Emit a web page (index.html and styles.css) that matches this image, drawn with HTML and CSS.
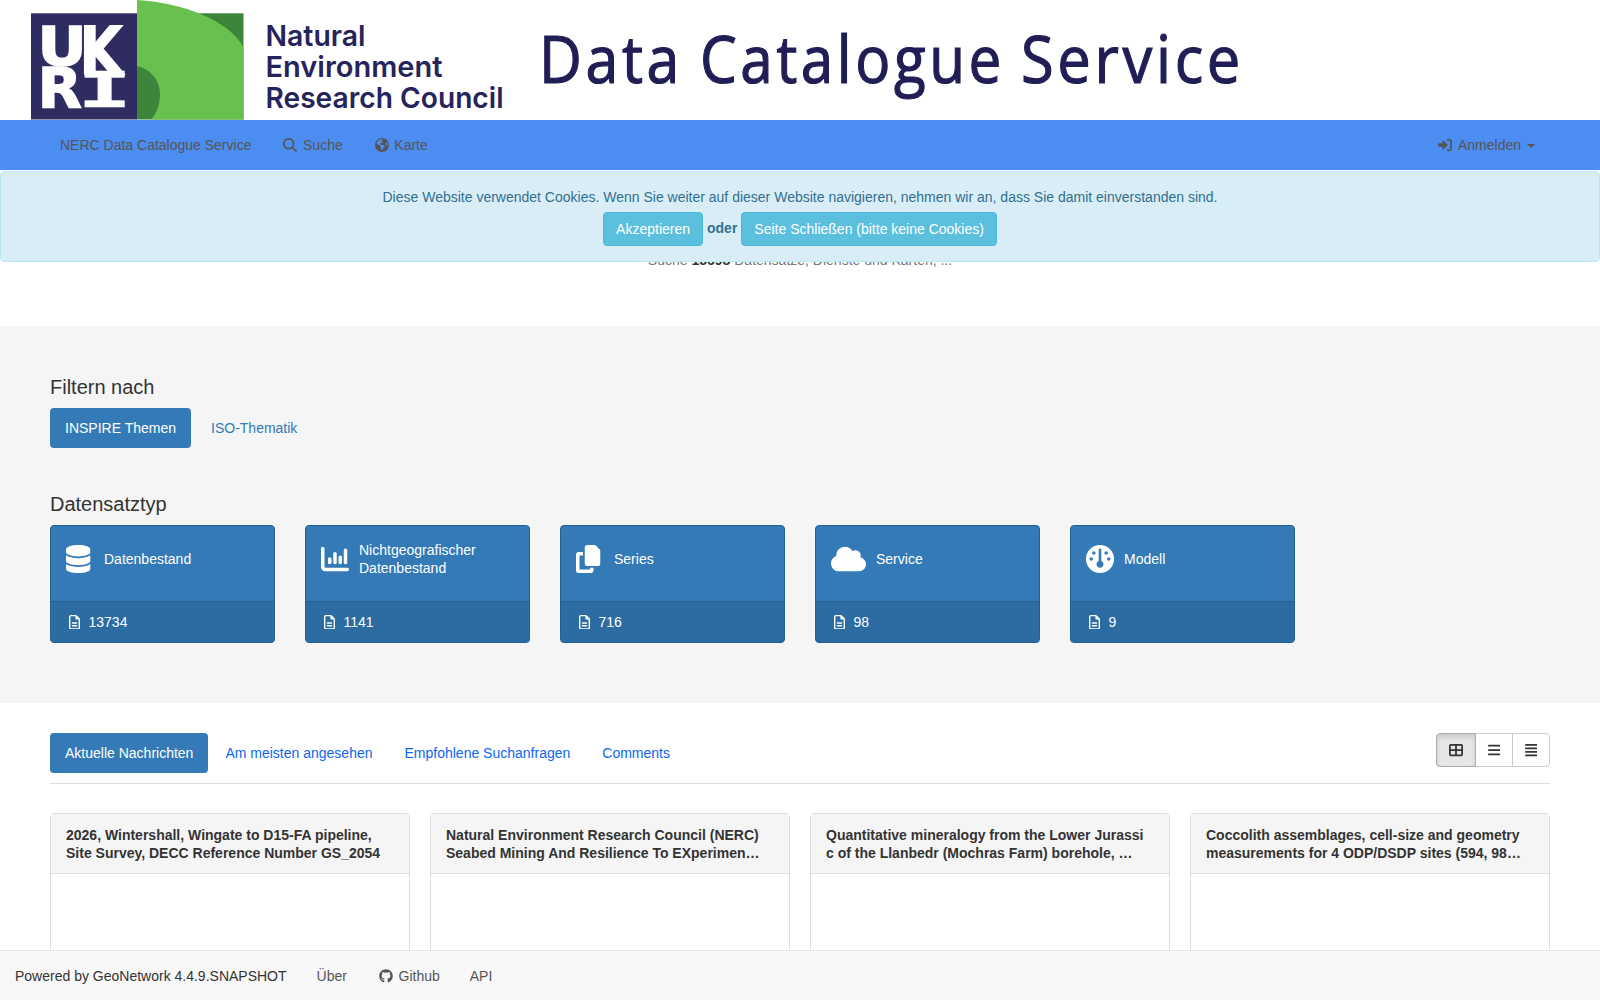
FILE: index.html
```html
<!DOCTYPE html>
<html lang="de">
<head>
<meta charset="utf-8">
<title>NERC Data Catalogue Service</title>
<link rel="stylesheet" href="styles.css">
</head>
<body>
<svg class="sprite" aria-hidden="true">
  <symbol id="search" viewBox="0 0 512 512"><path d="M416 208c0 45.9-14.9 88.3-40 122.7L502.6 457.4c12.5 12.5 12.5 32.8 0 45.3s-32.8 12.5-45.3 0L330.7 376c-34.4 25.2-76.8 40-122.7 40C93.1 416 0 322.9 0 208S93.1 0 208 0S416 93.1 416 208zM208 352a144 144 0 1 0 0-288 144 144 0 1 0 0 288z"/></symbol>
  <symbol id="globe" viewBox="0 0 512 512"><path d="M57.7 193l9.4 16.4c8.3 14.5 21.9 25.2 38 29.8L163 255.7c17.2 4.9 29 20.6 29 38.5v39.9c0 11 6.2 21 16 25.9s16 14.9 16 25.9v39c0 15.6 14.9 26.9 29.9 22.6c16.1-4.6 28.6-17.5 32.7-33.8l2.8-11.2c4.2-16.9 15.2-31.4 30.3-40l8.1-4.6c15-8.5 24.2-24.5 24.2-41.7v-8.3c0-12.7-5.1-24.9-14.1-33.9l-3.9-3.9c-9-9-21.2-14.1-33.9-14.1H257c-11.1 0-22.1-2.9-31.8-8.4l-34.5-19.7c-4.3-2.5-7.6-6.5-9.2-11.2c-3.2-9.6 1.1-20 10.2-24.5l5.9-3c6.6-3.3 14.3-3.9 21.3-1.5l23.2 7.7c8.2 2.7 17.2-.4 21.9-7.5c4.7-7 4.2-16.3-1.2-22.8l-13.6-16.3c-10-12-9.9-29.5 .3-41.3l15.7-18.3c8.8-10.3 10.2-25 3.5-36.7l-2.4-4.2c-3.5-.2-6.9-.3-10.4-.3C163.1 48 84.4 108.9 57.7 193zM464 256c0-36.8-9.6-71.4-26.4-101.5L412 164.8c-15.7 6.3-23.8 23.8-18.5 39.8l16.9 50.7c3.5 10.4 12 18.3 22.6 20.9l29.1 7.3c1.2-9 1.8-18.2 1.8-27.5zM0 256a256 256 0 1 1 512 0A256 256 0 1 1 0 256z"/></symbol>
  <symbol id="signin" viewBox="0 0 512 512"><path d="M217.9 105.9L340.7 228.7c7.2 7.2 11.3 17.1 11.3 27.3s-4.1 20.1-11.3 27.3L217.9 406.1c-6.4 6.4-15 9.9-24 9.9c-18.7 0-33.9-15.2-33.9-33.9l0-62.1L32 320c-17.7 0-32-14.3-32-32l0-64c0-17.7 14.3-32 32-32l128 0 0-62.1c0-18.7 15.2-33.9 33.9-33.9c9 0 17.6 3.6 24 9.9zM352 416l64 0c17.7 0 32-14.3 32-32l0-256c0-17.7-14.3-32-32-32l-64 0c-17.7 0-32-14.3-32-32s14.3-32 32-32l64 0c53 0 96 43 96 96l0 256c0 53-43 96-96 96l-64 0c-17.7 0-32-14.3-32-32s14.3-32 32-32z"/></symbol>
  <symbol id="database" viewBox="0 0 448 512"><path d="M448 80v48c0 44.2-100.3 80-224 80S0 172.2 0 128V80C0 35.8 100.3 0 224 0S448 35.8 448 80zM393.2 214.7c20.8-7.4 39.9-16.9 54.8-28.6V288c0 44.2-100.3 80-224 80S0 332.2 0 288V186.1c14.9 11.8 34 21.2 54.8 28.6C99.7 230.7 159.5 240 224 240s124.3-9.3 169.2-25.3zM0 346.1c14.9 11.8 34 21.2 54.8 28.6C99.7 390.7 159.5 400 224 400s124.3-9.3 169.2-25.3c20.8-7.4 39.9-16.9 54.8-28.6V432c0 44.2-100.3 80-224 80S0 476.2 0 432V346.1z"/></symbol>
  <symbol id="chart" viewBox="0 0 512 512"><path d="M32 32c17.7 0 32 14.3 32 32V400c0 8.8 7.2 16 16 16H480c17.7 0 32 14.3 32 32s-14.3 32-32 32H80c-44.2 0-80-35.8-80-80V64C0 46.3 14.3 32 32 32zM160 224c17.7 0 32 14.3 32 32v64c0 17.7-14.3 32-32 32s-32-14.3-32-32V256c0-17.7 14.3-32 32-32zm128-64V320c0 17.7-14.3 32-32 32s-32-14.3-32-32V160c0-17.7 14.3-32 32-32s32 14.3 32 32zm64 32c17.7 0 32 14.3 32 32v96c0 17.7-14.3 32-32 32s-32-14.3-32-32V224c0-17.7 14.3-32 32-32zM480 96V320c0 17.7-14.3 32-32 32s-32-14.3-32-32V96c0-17.7 14.3-32 32-32s32 14.3 32 32z"/></symbol>
  <symbol id="copy" viewBox="0 0 448 512"><path d="M208 0H332.1c12.7 0 24.9 5.1 33.9 14.1l67.9 67.9c9 9 14.1 21.2 14.1 33.9V336c0 26.5-21.5 48-48 48H208c-26.5 0-48-21.5-48-48V48c0-26.5 21.5-48 48-48zM48 128h80v64H64V448H256V416h64v48c0 26.5-21.5 48-48 48H48c-26.5 0-48-21.5-48-48V176c0-26.5 21.5-48 48-48z"/></symbol>
  <symbol id="cloud" viewBox="0 0 640 512"><path d="M0 336c0 79.5 64.5 144 144 144H512c70.7 0 128-57.3 128-128c0-61.9-44-113.6-102.4-125.4c4.1-10.7 6.4-22.4 6.4-34.6c0-53-43-96-96-96c-19.7 0-38.1 6-53.3 16.2C367 64.2 315.3 32 256 32C167.6 32 96 103.6 96 192c0 2.7 .1 5.4 .2 8.1C40.2 219.8 0 273.2 0 336z"/></symbol>
  <symbol id="gauge" viewBox="0 0 512 512"><path d="M0 256a256 256 0 1 1 512 0A256 256 0 1 1 0 256zm320 96c0-26.9-16.5-49.9-40-59.3V88c0-13.3-10.7-24-24-24s-24 10.7-24 24V292.7c-23.5 9.5-40 32.5-40 59.3c0 35.3 28.7 64 64 64s64-28.7 64-64zM144 176a32 32 0 1 0 0-64 32 32 0 1 0 0 64zm-16 80a32 32 0 1 0 -64 0 32 32 0 1 0 64 0zm288 32a32 32 0 1 0 0-64 32 32 0 1 0 0 64zM400 144a32 32 0 1 0 -64 0 32 32 0 1 0 64 0z"/></symbol>
  <symbol id="file" viewBox="0 0 384 512"><path d="M64 464c-8.8 0-16-7.2-16-16V64c0-8.8 7.2-16 16-16H224v80c0 17.7 14.3 32 32 32h80V448c0 8.8-7.2 16-16 16H64zM64 0C28.7 0 0 28.7 0 64V448c0 35.3 28.7 64 64 64H320c35.3 0 64-28.7 64-64V154.5c0-17-6.7-33.3-18.7-45.3L274.7 18.7C262.7 6.7 246.5 0 229.5 0H64zm56 256c-13.3 0-24 10.7-24 24s10.7 24 24 24H264c13.3 0 24-10.7 24-24s-10.7-24-24-24H120zm0 96c-13.3 0-24 10.7-24 24s10.7 24 24 24H264c13.3 0 24-10.7 24-24s-10.7-24-24-24H120z"/></symbol>
  <symbol id="github" viewBox="0 0 496 512"><path d="M244.8 8C106.1 8 0 113.3 0 252c0 110.9 69.8 205.8 169.5 239.2 12.8 2.3 17.3-5.6 17.3-12.1 0-6.2-.3-40.4-.3-61.4 0 0-70 15-84.7-29.8 0 0-11.4-29.1-27.8-36.6 0 0-22.9-15.7 1.6-15.4 0 0 24.9 2 38.6 25.8 21.9 38.6 58.6 27.5 72.9 20.9 2.3-16 8.8-27.1 16-33.7-55.9-6.2-112.3-14.3-112.3-110.5 0-27.5 7.6-41.3 23.6-58.9-2.6-6.5-11.1-33.3 2.6-67.9 20.9-6.5 69 27 69 27 20-5.6 41.5-8.5 62.8-8.5s42.8 2.9 62.8 8.5c0 0 48.1-33.6 69-27 13.7 34.7 5.2 61.4 2.6 67.9 16 17.7 25.8 31.5 25.8 58.9 0 96.5-58.9 104.2-114.8 110.5 9.2 7.9 17 22.9 17 46.4 0 33.7-.3 75.4-.3 83.6 0 6.5 4.6 14.4 17.3 12.1C428.2 457.8 496 362.9 496 252 496 113.3 383.5 8 244.8 8z"/></symbol>
  <symbol id="grid" viewBox="0 0 512 512"><path d="M448 96V224H288V96H448zm0 192V416H288V288H448zM224 224H64V96H224V224zM64 288H224V416H64V288zM64 32C28.7 32 0 60.7 0 96V416c0 35.3 28.7 64 64 64H448c35.3 0 64-28.7 64-64V96c0-35.3-28.7-64-64-64H64z"/></symbol>
  <symbol id="bars" viewBox="0 0 448 512"><path d="M32 64H416a32 32 0 0 1 0 64H32a32 32 0 0 1 0-64zM32 224H416a32 32 0 0 1 0 64H32a32 32 0 0 1 0-64zM32 384H416a32 32 0 0 1 0 64H32a32 32 0 0 1 0-64z"/></symbol>
  <symbol id="justify" viewBox="0 0 448 512"><path d="M32 32H416a32 32 0 0 1 0 64H32a32 32 0 0 1 0-64zM32 160H416a32 32 0 0 1 0 64H32a32 32 0 0 1 0-64zM32 288H416a32 32 0 0 1 0 64H32a32 32 0 0 1 0-64zM32 416H416a32 32 0 0 1 0 64H32a32 32 0 0 1 0-64z"/></symbol>
</svg>

<header class="banner">
  <svg class="banner-art" width="1300" height="120" viewBox="0 0 1300 120" role="img" aria-label="UKRI Natural Environment Research Council">
    <rect x="31" y="13.3" width="106" height="106.2" fill="#2e2c61"/>
    <rect x="137" y="13.3" width="106.5" height="106.2" fill="#3e853c"/>
    <path d="M137 0C185 3 229 21 243.500 47V119.500H151C164 106 166 73 137 66Z" fill="#68c04e"/>
    <g class="mark">
      <text transform="translate(37.500 65) scale(1.120 1)" font-size="54">U</text>
      <text transform="translate(79.500 73.500) scale(.840 1)" font-size="66">K</text>
      <text transform="translate(37.800 107.300) scale(1.040 1)" font-size="55">R</text>
      <text class="slab" transform="translate(77.500 107.300) scale(1.800 1)" font-size="50">I</text>
    </g>
    <g class="council">
      <text x="265.500" y="46" textLength="100" lengthAdjust="spacingAndGlyphs">Natural</text>
      <text x="265.500" y="77" textLength="177" lengthAdjust="spacingAndGlyphs">Environment</text>
      <text x="265.500" y="108" textLength="238" lengthAdjust="spacingAndGlyphs">Research Council</text>
    </g>
    <g class="service">
      <text x="539" y="83" textLength="144" lengthAdjust="spacingAndGlyphs">Data</text>
      <text x="700" y="83" textLength="305" lengthAdjust="spacingAndGlyphs">Catalogue</text>
      <text x="1021" y="83" textLength="223" lengthAdjust="spacingAndGlyphs">Service</text>
    </g>
  </svg>
</header>

<nav class="topbar">
  <a class="brand">NERC Data Catalogue Service</a>
  <a><svg class="ic fw"><use href="#search"/></svg>Suche</a>
  <a><svg class="ic fw"><use href="#globe"/></svg>Karte</a>
  <a class="login"><svg class="ic fw"><use href="#signin"/></svg>Anmelden<span class="caret"></span></a>
</nav>

<div class="cookie">
  <p>Diese Website verwendet Cookies. Wenn Sie weiter auf dieser Website navigieren, nehmen wir an, dass Sie damit einverstanden sind.</p>
  <div class="choices"><button>Akzeptieren</button><strong>oder</strong><button>Seite Schließen (bitte keine Cookies)</button></div>
</div>

<section class="intro">Suche&nbsp;<b>15698</b>&nbsp;Datensätze, Dienste und Karten, ...</section>

<section class="facets">
  <h2>Filtern nach</h2>
  <div class="pills"><a class="on">INSPIRE Themen</a><a>ISO-Thematik</a></div>
  <h2>Datensatztyp</h2>
  <div class="tiles">
    <a class="tile"><span class="kind"><svg class="w28" viewBox="0 0 512 512"><use href="#database" width="448" height="512"/></svg>Datenbestand</span><span class="count"><svg><use href="#file"/></svg>13734</span></a>
    <a class="tile"><span class="kind"><svg class="w28"><use href="#chart"/></svg>Nichtgeografischer Datenbestand</span><span class="count"><svg><use href="#file"/></svg>1141</span></a>
    <a class="tile"><span class="kind"><svg class="w28" viewBox="0 0 512 512"><use href="#copy" width="448" height="512"/></svg>Series</span><span class="count"><svg><use href="#file"/></svg>716</span></a>
    <a class="tile"><span class="kind"><svg class="w35"><use href="#cloud"/></svg>Service</span><span class="count"><svg><use href="#file"/></svg>98</span></a>
    <a class="tile"><span class="kind"><svg class="w28"><use href="#gauge"/></svg>Modell</span><span class="count"><svg><use href="#file"/></svg>9</span></a>
  </div>
</section>

<main class="news">
  <div class="tabbar">
    <div class="tabs"><a class="on">Aktuelle Nachrichten</a><a>Am meisten angesehen</a><a>Empfohlene Suchanfragen</a><a>Comments</a></div>
    <div class="views"><button class="on"><svg width="14" height="14"><use href="#grid"/></svg></button><button><svg width="12.250" height="14"><use href="#bars"/></svg></button><button><svg width="12.250" height="14"><use href="#justify"/></svg></button></div>
  </div>
  <div class="cards">
    <article><h3>2026, Wintershall, Wingate to D15-FA pipeline,<br>Site Survey, DECC Reference Number GS_2054</h3></article>
    <article><h3>Natural Environment Research Council (NERC)<br>Seabed Mining And Resilience To EXperimen…</h3></article>
    <article><h3>Quantitative mineralogy from the Lower Jurassi<br>c of the Llanbedr (Mochras Farm) borehole, …</h3></article>
    <article><h3>Coccolith assemblages, cell-size and geometry<br>measurements for 4 ODP/DSDP sites (594, 98…</h3></article>
  </div>
</main>

<footer class="footer">
  <span class="powered">Powered by GeoNetwork 4.4.9.SNAPSHOT</span>
  <a>Über</a>
  <a><svg class="ic fw"><use href="#github"/></svg>Github</a>
  <a>API</a>
</footer>
</body>
</html>
```

FILE: styles.css
```css
* { box-sizing: border-box; }
html, body { height: 100%; }
body {
  margin: 0;
  overflow: hidden;
  display: flex;
  flex-direction: column;
  font: 14px/20px "Liberation Sans", Arial, sans-serif;
  color: #333;
  background: #fff;
}
body > * { flex: none; }
svg { fill: currentColor; flex: none; }
.sprite { position: absolute; width: 0; height: 0; }
h2, h3, p { margin: 0; }
button { font: inherit; }

.banner { height: 120px; }
.banner-art { display: block; }
.mark { fill: #fff; stroke: #fff; stroke-width: 1.5px; font-family: "DejaVu Sans", sans-serif; font-weight: 700; }
.slab { font-family: "DejaVu Sans Mono", monospace; stroke-width: .5px; }
.council { fill: #26245c; font: 600 29px Inter, sans-serif; }
.service { fill: #211e56; stroke: #211e56; stroke-width: 1.2px; font: 500 65px "Open Sans", sans-serif; letter-spacing: 4px; }

.topbar {
  height: 50px;
  padding: 0 50px 0 45px;
  display: flex;
  background: #4c8df1;
}
.topbar a { display: flex; align-items: center; padding: 0 15px; color: #555; }
.ic { width: 14px; height: 14px; }
.fw { margin: 0 5.6px 0 2px; }
.login { margin-left: auto; }
.caret { margin: 1px 0 0 6px; border: 4px solid transparent; border-top-color: currentColor; border-bottom: 0; }

.cookie {
  position: relative;
  z-index: 1;
  height: 91px;
  margin-top: 1px;
  padding: 15px;
  border: 1px solid #bce8f1;
  border-radius: 4px;
  background: #d9edf7;
  color: #31708f;
  text-align: center;
}
.choices { display: flex; justify-content: center; gap: 4px; margin-top: 5px; line-height: 32px; }
.choices button {
  height: 34px;
  padding: 0 12px;
  border: 1px solid #46b8da;
  border-radius: 4px;
  background: #5bc0de;
  color: #fff;
}
.intro { height: 74px; margin-top: -10px; text-align: center; color: #777; line-height: 16px; }
.intro b { color: #333; }

.facets { height: 377px; padding: 50px; background: #f5f5f5; }
.facets h2 { font-size: 20px; font-weight: 400; line-height: 22px; }
.pills { display: flex; gap: 5px; margin: 10px 0 45px; }
.pills a, .tabs a { height: 40px; padding: 10px 15px; border-radius: 4px; }
.pills a { color: #337ab7; }
.pills .on, .tabs .on { background: #337ab7; color: #fff; }
.tiles { display: flex; gap: 30px; margin-top: 10px; }
.tile {
  width: 225px;
  height: 118px;
  display: flex;
  flex-direction: column;
  border: 1px solid #245f92;
  border-radius: 4px;
  overflow: hidden;
  background: #337ab7;
  color: #fff;
}
.kind { flex: 1; display: flex; align-items: center; gap: 10px; padding: 0 45px 10px 15px; line-height: 18px; }
.kind svg { height: 28px; }
.w28 { width: 28px; }
.w35 { width: 35px; }
.count { height: 41px; display: flex; align-items: center; gap: 8.5px; padding-left: 18px; border-top: 1px solid #245f92; background: #2d6ca2; }
.count svg { width: 11px; height: 14.600px; }

.news { padding: 30px 50px 0; }
.tabbar { display: flex; justify-content: space-between; height: 51px; border-bottom: 1px solid #ddd; }
.tabs { display: flex; gap: 2px; }
.tabs a:not(.on) { color: #0b66f5; }
.views { display: flex; }
.views button {
  width: 38px;
  height: 34px;
  margin-left: -1px;
  padding: 0;
  display: flex;
  align-items: center;
  justify-content: center;
  border: 1px solid #ccc;
  background: #fff;
  color: #333;
}
.views .on { z-index: 1; width: 40px; border-color: #adadad; border-radius: 4px 0 0 4px; background: #e6e6e6; box-shadow: inset 0 3px 5px rgba(0, 0, 0, .125); }
.views button:last-child { border-radius: 0 4px 4px 0; }
.cards { display: grid; grid-template-columns: repeat(4, 360px); gap: 20px; margin-top: 29px; }
.cards article { height: 160px; border: 1px solid #ddd; border-radius: 4px; }
.cards h3 { height: 60px; padding: 12px 15px 0; border-bottom: 1px solid #ddd; background: #f5f5f5; font-size: 14px; font-weight: 700; line-height: 18px; white-space: nowrap; }

.footer {
  position: fixed;
  left: 0;
  right: 0;
  bottom: 0;
  z-index: 2;
  height: 50px;
  display: flex;
  align-items: center;
  border-top: 1px solid #e7e7e7;
  background: #f8f8f8;
  color: #555;
}
.footer .powered { padding: 0 15px; color: #333; }
.footer a { display: flex; align-items: center; padding: 0 15px; }
```
